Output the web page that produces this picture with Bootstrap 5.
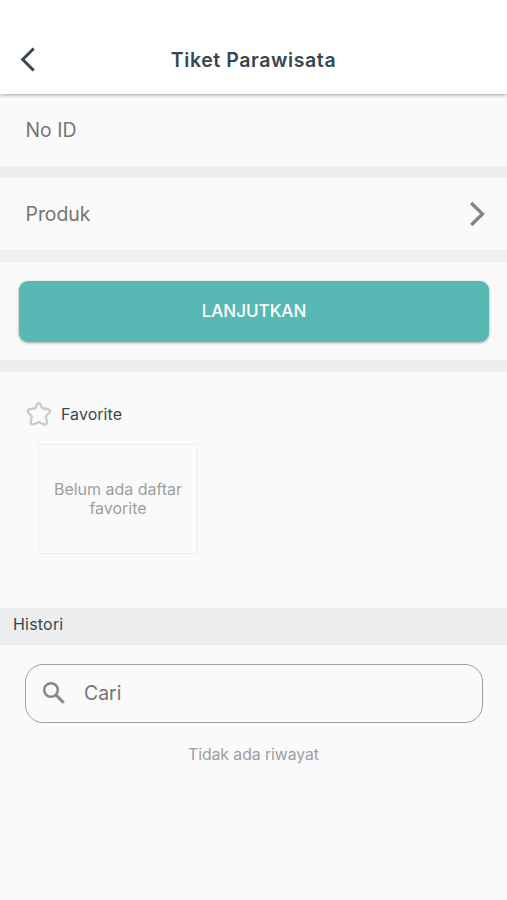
<!DOCTYPE html>
<html lang="id">
<head>
<meta charset="utf-8">
<meta name="viewport" content="width=device-width, initial-scale=1">
<title>Tiket Parawisata</title>
<link href="https://cdn.jsdelivr.net/npm/bootstrap@5.3.0/dist/css/bootstrap.min.css" rel="stylesheet">
<style>
body { font-family: Inter, "Liberation Sans", sans-serif; background: #fafafa; color: #37474f; min-height: 900px; }
svg { display: block; flex: none; }
.app-header { height: 94px; padding: 26px 20px 0; background: #fff; box-shadow: 0 1px 4px rgba(0,0,0,.35); }
.app-title { font-size: 19.5px; font-weight: 600; letter-spacing: .6px; line-height: 24px; }
.form-row { height: 72px; padding: 0 21px 0 25.5px; color: #757575; font-size: 19.4px; letter-spacing: 0; }
.form-row span { padding-top: 1px; }
.strip { height: 12px; background: #eceef0; }
.action-row { height: 98px; padding: 19px 18px 0 19px; }
.btn-next { --bs-btn-bg: #58b8b3; --bs-btn-color: #fff; --bs-btn-border-width: 0; --bs-btn-border-radius: 9px; --bs-btn-hover-bg: #4caaa5; --bs-btn-hover-color: #fff;
  height: 61px; font-size: 17px; font-weight: 500; letter-spacing: 0; box-shadow: 0 1px 3px rgba(0,0,0,.35); }
.favorites { height: 236px; padding: 29px 26px 0; }
.fav-label { gap: 9px; font-size: 16px; line-height: 26px; letter-spacing: .05px; }
.fav-empty { width: 160px; height: 110px; margin: 17px 0 0 12px; border: 1px solid #eeeff0; color: #9e9e9e; font-size: 16px; line-height: 19.5px; letter-spacing: -.02px; }
.history-head { height: 37px; padding: 0 13px 5px; background: #eceef0; font-size: 16px; letter-spacing: .2px; }
.search-box { height: 59px; margin: 19px 24px 0 25px; padding: 0 16px 1px; gap: 18px; border: 1.5px solid #9e9e9e; border-radius: 18px; color: #757575; font-size: 19.4px; letter-spacing: 0; }
.search-box span { padding-top: 1px; }
.history-empty { margin-top: 20px; color: #9e9e9e; font-size: 15.8px; line-height: 24px; letter-spacing: -.06px; }
</style>
<script src="https://cdn.jsdelivr.net/npm/bootstrap@5.3.0/dist/js/bootstrap.bundle.min.js"></script>
</head>
<body>
<header class="app-header position-relative d-flex align-items-center justify-content-between">
  <svg width="16" height="26" viewBox="0 0 16 26" fill="none" stroke="#37474f" stroke-width="3"><path d="M13.7 1.500 2.700 12.500l11 11"/></svg>
  <h1 class="app-title m-0">Tiket Parawisata</h1>
  <span class="px-2"></span>
</header>
<main>
  <div class="form-row d-flex align-items-center"><span>No ID</span></div>
  <div class="strip"></div>
  <div class="form-row d-flex align-items-center justify-content-between">
    <span>Produk</span>
    <svg width="17" height="26" viewBox="0 0 17 26" fill="none" stroke="#858585" stroke-width="3.3"><path d="M2.2 2 13.5 13 2.2 24"/></svg>
  </div>
  <div class="strip"></div>
  <div class="action-row"><button type="button" class="btn btn-next w-100 p-0">LANJUTKAN</button></div>
  <div class="strip"></div>
  <section class="favorites">
    <div class="d-flex align-items-center fav-label">
      <svg width="26" height="26" viewBox="0 0 26 26" fill="none" stroke="#cccccc" stroke-width="2.4" stroke-linejoin="round"><path d="M11.200 3.200Q12.800 .8 14.400 3.200L16.300 7.300 21.700 8.200Q25.200 9.100 23.200 11.700L19.900 15.300 20.900 20.600Q21 24.200 17.600 23.400L12.800 21 8 23.400Q4.600 24.200 4.700 20.600L5.700 15.300 2.400 11.700Q.4 9.100 3.900 8.200L9.300 7.300Z"/></svg>
      <span>Favorite</span>
    </div>
    <div class="fav-empty d-flex align-items-center justify-content-center text-center">Belum ada daftar<br>favorite</div>
  </section>
  <div class="history-head d-flex align-items-center">Histori</div>
  <div class="search-box d-flex align-items-center">
    <svg width="24" height="24" viewBox="0 0 24 24" fill="none" stroke="#858585"><circle cx="9" cy="9" r="6.800" stroke-width="2.400"/><path d="m14 14 7.700 7.700" stroke-width="3"/></svg>
    <span>Cari</span>
  </div>
  <p class="history-empty text-center mb-0">Tidak ada riwayat</p>
</main>
</body>
</html>
